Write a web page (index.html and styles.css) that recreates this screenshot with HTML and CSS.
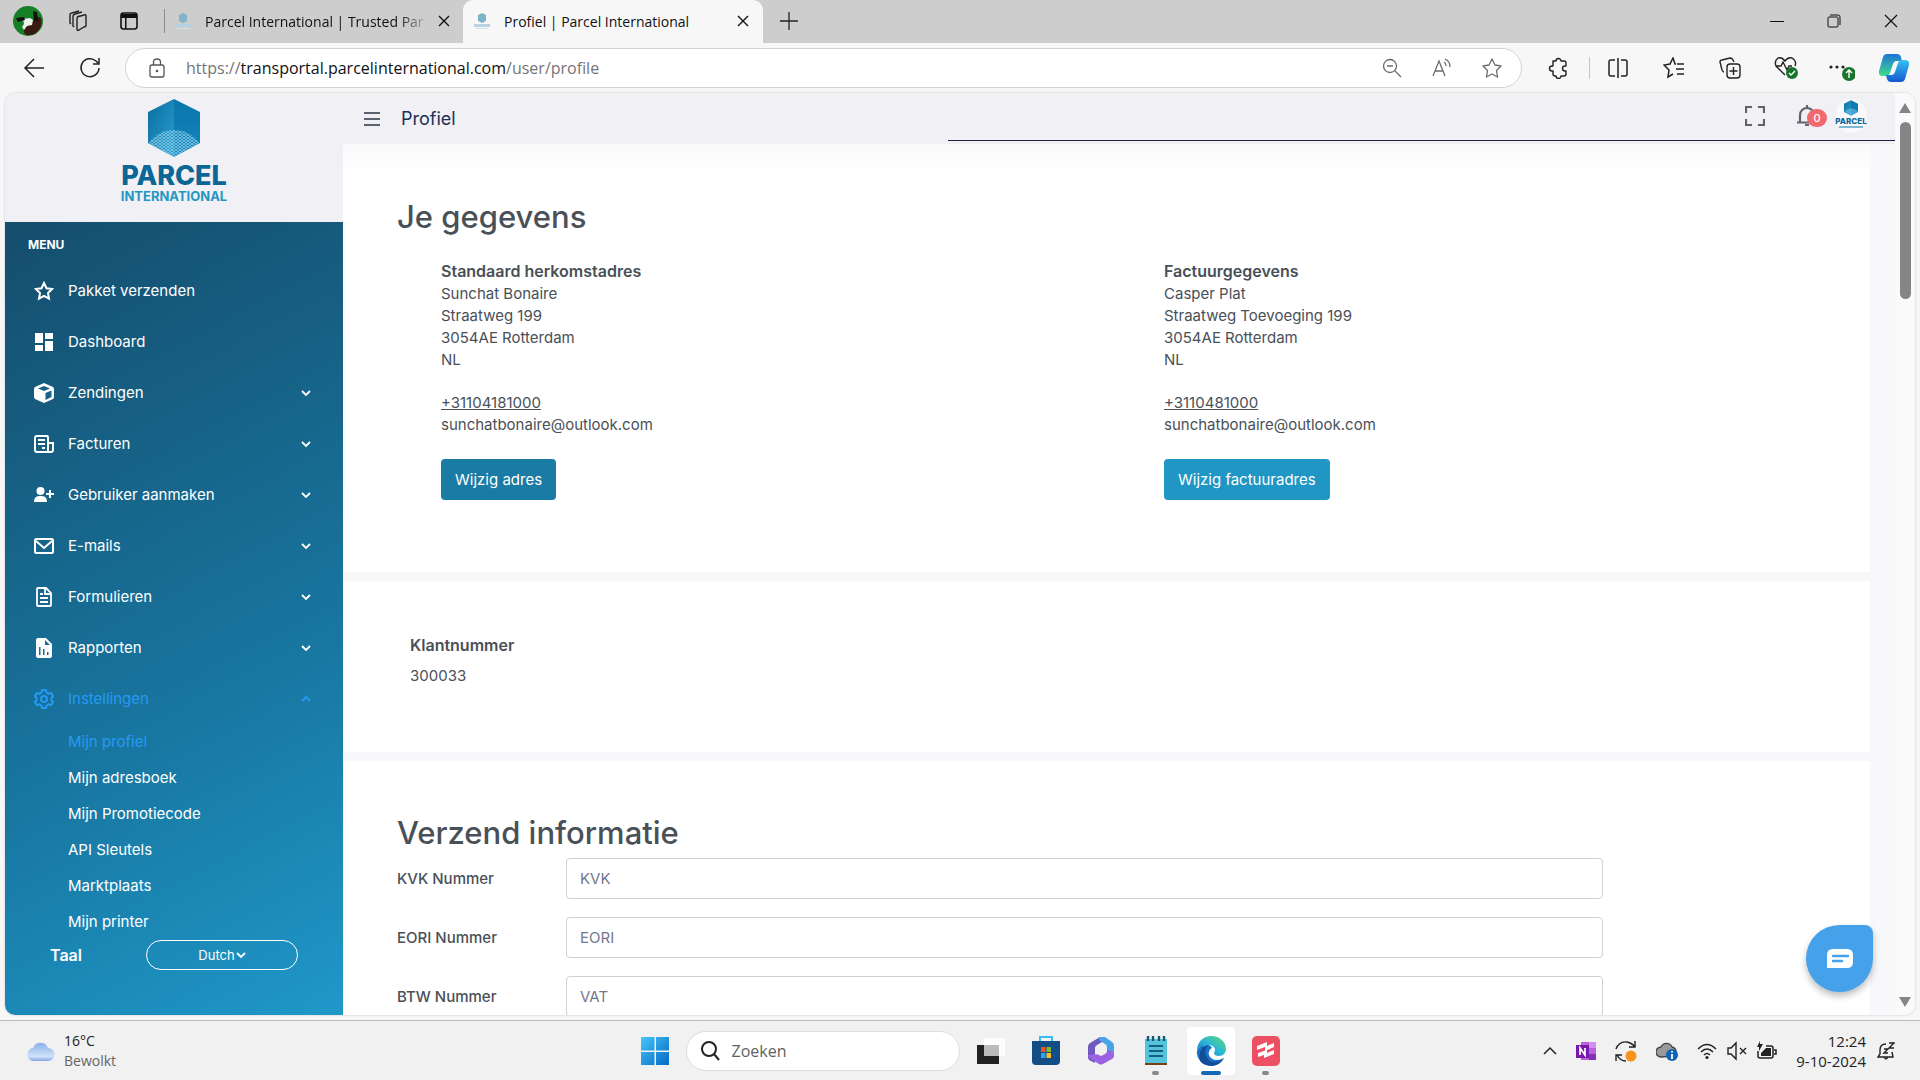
FILE: index.html
```html
<!DOCTYPE html>
<html lang="nl">
<head>
<meta charset="utf-8">
<title>Profiel | Parcel International</title>
<link rel="stylesheet" href="styles.css">
</head>
<body>
<svg class="sprite" aria-hidden="true">
  <defs>
    <linearGradient id="cubeLeft" x1="0" y1="0" x2="1" y2="1"><stop offset="0" stop-color="#0a6d9f"/><stop offset="1" stop-color="#2a9fd0"/></linearGradient>
    <linearGradient id="cubeRight" x1="0" y1="0" x2="0" y2="1"><stop offset="0" stop-color="#0a75ab"/><stop offset="1" stop-color="#1487bd"/></linearGradient>
    <linearGradient id="edgeGreen" x1="0" y1="1" x2="1" y2="0"><stop offset="0" stop-color="#1272c4"/><stop offset=".5" stop-color="#29b8d8"/><stop offset="1" stop-color="#5fdc6a"/></linearGradient>
    <linearGradient id="winBlue" x1="0" y1="0" x2="1" y2="1"><stop offset="0" stop-color="#45c6f8"/><stop offset="1" stop-color="#0668c4"/></linearGradient>
    <linearGradient id="cloudFill" x1="0" y1="0" x2="0" y2="1"><stop offset="0" stop-color="#8ab0ea"/><stop offset=".75" stop-color="#cfe2fa"/><stop offset="1" stop-color="#88a5e6"/></linearGradient>
    <linearGradient id="pilotA" x1="0" y1="0" x2="0" y2="1"><stop offset="0" stop-color="#1d73d8"/><stop offset="1" stop-color="#3fdc8c"/></linearGradient>
    <linearGradient id="pilotB" x1="0" y1="0" x2="0" y2="1"><stop offset="0" stop-color="#35c2f3"/><stop offset="1" stop-color="#1457d0"/></linearGradient>
    <pattern id="mesh" width="4" height="3" patternUnits="userSpaceOnUse"><path d="M0 3 4 0M0 0l4 3" stroke="#8fd0ee" stroke-width=".8"/></pattern>
    <symbol id="cube" viewBox="0 0 52 58"><path d="M26 0 0 13v31l26 14z" fill="url(#cubeLeft)"/><path d="M26 0l26 13v31L26 58z" fill="url(#cubeRight)"/><path d="M1 44c6-9 15-13 25-13s19 4 25 13L26 58z" fill="url(#mesh)"/></symbol>
    <symbol id="chev" viewBox="0 0 10 10"><path d="M1 3l4 4 4-4" fill="none" stroke="currentColor" stroke-width="1.8"/></symbol>
    <symbol id="close" viewBox="0 0 12 12"><path d="M1 1l10 10M11 1 1 11" fill="none" stroke="currentColor" stroke-width="1.4"/></symbol>
    <symbol id="favicon" viewBox="0 0 16 16"><path d="M8 0l4 2v6l-4 2-4-2V2z" fill="#7fb4cb"/><path d="M0 11h16v3H0z" fill="#b5d3e0"/><path d="M2 15h12v1H2z" fill="#d6e4ea"/></symbol>
  </defs>
</svg>

<div class="tabstrip">
  <button class="avatar" aria-label="Account"><svg viewBox="0 0 30 30"><circle cx="15" cy="15" r="15" fill="#158026"/><path d="M13 29c-4-3-2-9 2-11 4-1 6-4 8-8l5 2c2 7-2 15-9 17z" fill="#3c1a14"/><path d="M10 13l7-1 3 2-1 5-5 1-3 4-2-3 2-3z" fill="#edf4ec"/><path d="M3 12l8-1 1 3-7 2zM20 5l4 1 1 8-4 2z" fill="#111"/></svg></button>
  <button class="strip-btn" aria-label="Werkruimten"><svg class="i22" viewBox="0 0 22 22"><g fill="none" stroke="#222" stroke-width="1.4"><path d="M11 7l7-2q2-1 2 1v9q0 2-2 2l-5 3q-2 1-2-1V8q0-1 2-2"/><path d="M8 17l-1-1V6q0-1 2-2l7-2M5 14l-1-1V5q0-2 2-2l7-2" /></g></svg></button>
  <button class="strip-btn" aria-label="Tabbladacties"><svg class="i18" viewBox="0 0 18 18"><rect x="1" y="1" width="16" height="16" rx="2.500" fill="none" stroke="#111" stroke-width="1.600"/><path d="M1 2h16v4H1zM5 6h1.500v11H5z" fill="#111"/></svg></button>
  <span class="strip-line"></span>
  <div class="tab"><svg class="i16"><use href="#favicon"/></svg><span class="tab-title faded">Parcel International | Trusted Part</span><button aria-label="Sluiten"><svg class="i12"><use href="#close"/></svg></button></div>
  <div class="tab active"><svg class="i16"><use href="#favicon"/></svg><span class="tab-title">Profiel | Parcel International</span><button aria-label="Sluiten"><svg class="i12"><use href="#close"/></svg></button></div>
  <button class="strip-btn" aria-label="Nieuw tabblad"><svg class="i18" viewBox="0 0 18 18"><path d="M9 0v18M0 9h18" stroke="#222" stroke-width="1.300"/></svg></button>
  <div class="win-controls">
    <button aria-label="Minimaliseren"><svg class="i14" viewBox="0 0 14 14"><path d="M0 7.500h14" stroke="#111"/></svg></button>
    <button aria-label="Herstellen"><svg class="i14" viewBox="0 0 14 14"><path d="M3 1h8q2 0 2 2v8" fill="none" stroke="#111"/><rect x="1" y="3" width="10" height="10" rx="1" fill="none" stroke="#111"/></svg></button>
    <button aria-label="Sluiten"><svg class="i14" viewBox="0 0 14 14"><path d="M1 1l12 12M13 1 1 13" stroke="#111" stroke-width="1.200"/></svg></button>
  </div>
</div>

<div class="toolbar">
  <button class="tool" aria-label="Terug"><svg class="i22" viewBox="0 0 22 22"><path d="M21 11H2M11 2l-9 9 9 9" fill="none" stroke="#222" stroke-width="1.500"/></svg></button>
  <button class="tool" aria-label="Vernieuwen"><svg class="i22" viewBox="0 0 22 22"><path d="M20 11a9 9 0 1 1-3-7l2 2M20 1v6h-6" fill="none" stroke="#222" stroke-width="1.500"/></svg></button>
  <div class="omnibox">
    <svg class="i20" viewBox="0 0 20 20"><g fill="none" stroke="#555" stroke-width="1.300"><rect x="3" y="7" width="14" height="12" rx="2"/><path d="M6.500 7V4q0-3 3.500-3t3.500 3v3"/></g><circle cx="10" cy="13" r="1.300" fill="#555"/></svg>
    <span class="url">https://<b>transportal.parcelinternational.com</b>/user/profile</span>
    <button aria-label="Uitzoomen"><svg class="i20" viewBox="0 0 20 20"><g fill="none" stroke="#6c6c6c" stroke-width="1.300"><circle cx="8" cy="8" r="6.500"/><path d="M5 8h6M13 13l6 6"/></g></svg></button>
    <button aria-label="Voorlezen"><svg class="i20" viewBox="0 0 20 20"><path d="M1 18 7 3l6 15M3 13h8M12 4q2 1 2 4M13 1q5 2 5 8" fill="none" stroke="#6c6c6c" stroke-width="1.300"/></svg></button>
    <button aria-label="Favoriet"><svg class="i20" viewBox="0 0 20 20"><path d="M10 1l3 6 6 1-4.500 4.500 1 6.500-5.500-3-5.500 3 1-6.500L1 8l6-1z" fill="none" stroke="#6c6c6c" stroke-width="1.300" stroke-linejoin="round"/></svg></button>
  </div>
  <div class="tools">
    <button class="tool first" aria-label="Extensies"><svg class="i22" viewBox="0 0 22 22"><path d="M5 4h3a2.500 2.500 0 0 1 5 0h3q2 0 2 2v3h-1a2.500 2.500 0 0 0 0 5h1v3q0 2-2 2h-3a2.500 2.500 0 0 1-5 0H7q-2 0-2-2v-3H4a2.500 2.500 0 0 1 0-5h1z" fill="none" stroke="#222" stroke-width="1.400" stroke-linejoin="round"/></svg></button>
    <span class="tool-line"></span>
    <button class="tool" aria-label="Scherm splitsen"><svg class="i22" viewBox="0 0 22 22"><path d="M8 3H4Q2 3 2 5v12q0 2 2 2h4M14 3h4q2 0 2 2v12q0 2-2 2h-4M11 1v20" fill="none" stroke="#222" stroke-width="1.500"/></svg></button>
    <button class="tool" aria-label="Favorieten"><svg class="i22" viewBox="0 0 22 22"><path d="M13 7h-1L10 1 7 7l-6 1 5 5-1 7 5-3M14 7h7M13 12h8M14 17h7" fill="none" stroke="#222" stroke-width="1.500"/></svg></button>
    <button class="tool" aria-label="Verzamelingen"><svg class="i22" viewBox="0 0 22 22"><g fill="none" stroke="#222" stroke-width="1.400"><path d="M5 15q-1 0-2-2L1 5q0-2 2-2l8-2q2 0 3 2l1 2"/><rect x="8" y="7" width="13" height="14" rx="3"/><path d="M14.500 10v8M10.500 14h8"/></g></svg></button>
    <button class="tool" aria-label="Browseressenties"><svg class="i24" viewBox="0 0 24 24"><path d="M11 19 2 10Q0 5 4 2q4-1 7 3 3-4 7-3 5 3 3 8M2 10h5l2-4 4 8 2-4h3" fill="none" stroke="#222" stroke-width="1.400"/><circle cx="18" cy="17" r="6" fill="#19752b"/><path d="M15 17l2 2 4-4" fill="none" stroke="#fff" stroke-width="1.400"/></svg></button>
    <button class="tool" aria-label="Meer"><svg class="i26" viewBox="0 0 26 26"><g fill="#222"><circle cx="2" cy="12" r="1.600"/><circle cx="8" cy="12" r="1.600"/><circle cx="14" cy="12" r="1.600"/></g><circle cx="20" cy="19" r="7" fill="#19752b"/><path d="M20 23v-8M17 18l3-3 3 3" fill="none" stroke="#fff" stroke-width="1.400"/></svg></button>
    <button class="tool last" aria-label="Copilot"><svg class="i30" viewBox="0 0 30 30"><path d="M8 1h10q3 0 4 3l1 4h-6q-2 0-3 3l-3 9q-1 3-4 3H3q-4-1-3-5L4 4q1-3 4-3z" fill="url(#pilotA)"/><path d="M22 29H12q-3 0-4-3l-1-4h6q2 0 3-3l3-9q1-3 4-3h4q4 1 3 5l-4 14q-1 3-4 3z" fill="url(#pilotB)"/></svg></button>
  </div>
</div>

<div class="viewport">
  <aside class="sidebar">
    <a class="brand" href="#"><svg class="brand-cube"><use href="#cube"/></svg><span class="brand-name">PARCEL</span><span class="brand-sub">INTERNATIONAL</span></a>
    <nav class="menu">
      <p class="menu-title">MENU</p>
      <a href="#" class="item"><svg viewBox="0 0 20 20"><path d="M10 2l2.500 5.300 5.500.7-4 4 1 5.700-5-2.800-5 2.800L6 12 2 8l5.500-.7z" fill="none" stroke="currentColor" stroke-width="2"/></svg><span>Pakket verzenden</span></a>
      <a href="#" class="item"><svg viewBox="0 0 20 20"><path d="M1 1h8v10H1zM11 1h8v6h-8zM1 13h8v6H1zM11 9h8v10h-8z" fill="currentColor"/></svg><span>Dashboard</span></a>
      <a href="#" class="item"><svg viewBox="0 0 20 20"><path d="M10 0l9 4q1 1 1 2v8q0 1-1 2l-9 4-9-4q-1-1-1-2V6q0-1 1-2z" fill="currentColor"/><path d="M10 3 4 5.500 10 8l6-2.500zM11.500 10v7l6-3V7.500z" fill="#17618a"/></svg><span>Zendingen</span><svg class="caret"><use href="#chev"/></svg></a>
      <a href="#" class="item"><svg viewBox="0 0 20 20"><path d="M3 2h10q1 0 1 1v15H3q-2 0-2-2V4q0-2 2-2zM14 9h5v7q0 2-2 2h-3M4 6h7M4 10h7M8 14h3" fill="none" stroke="currentColor" stroke-width="2"/></svg><span>Facturen</span><svg class="caret"><use href="#chev"/></svg></a>
      <a href="#" class="item"><svg viewBox="0 0 20 20"><circle cx="6.500" cy="6" r="4" fill="currentColor"/><path d="M0 17q0-6 5-6h3q5 0 5 6zM15 5h2v3h3v2h-3v3h-2v-3h-3V8h3z" fill="currentColor"/></svg><span>Gebruiker aanmaken</span><svg class="caret"><use href="#chev"/></svg></a>
      <a href="#" class="item"><svg viewBox="0 0 20 20"><rect x="1" y="3" width="18" height="14" rx="1.500" fill="none" stroke="currentColor" stroke-width="2"/><path d="M2 5l8 7 8-7" fill="none" stroke="currentColor" stroke-width="2"/></svg><span>E-mails</span><svg class="caret"><use href="#chev"/></svg></a>
      <a href="#" class="item"><svg viewBox="0 0 20 20"><path d="M4 1h8l5 5v12q0 1-1 1H4q-1 0-1-1V2q0-1 1-1zM11 1v6h6M6 7h3M6 11h8M6 15h8" fill="none" stroke="currentColor" stroke-width="1.800"/></svg><span>Formulieren</span><svg class="caret"><use href="#chev"/></svg></a>
      <a href="#" class="item"><svg viewBox="0 0 20 20"><path d="M4 0h8l6 6v12q0 2-2 2H4q-2 0-2-2V2q0-2 2-2z" fill="currentColor"/><path d="M11 2v5h5zM5 9h1.500v8H5zM9 11h1.500v6H9zM13 14h1.500v3H13z" fill="#1a6c96"/></svg><span>Rapporten</span><svg class="caret"><use href="#chev"/></svg></a>
      <a href="#" class="item current"><svg viewBox="0 0 20 20"><g fill="none" stroke="currentColor" stroke-width="2" stroke-linejoin="round"><path d="M8 1h4l.6 2.600 2 1.200 2.600-.8 2 3.400L17.300 9v2l1.900 1.700-2 3.400-2.600-.8-2 1.200L12 19H8l-.6-2.500-2-1.200-2.600.8-2-3.400L2.700 11V9L.8 7.400l2-3.400 2.600.8 2-1.200z"/><circle cx="10" cy="10" r="3"/></g></svg><span>Instellingen</span><svg class="caret up"><use href="#chev"/></svg></a>
      <div class="submenu">
        <a href="#" class="current">Mijn profiel</a>
        <a href="#">Mijn adresboek</a>
        <a href="#">Mijn Promotiecode</a>
        <a href="#">API Sleutels</a>
        <a href="#">Marktplaats</a>
        <a href="#">Mijn printer</a>
      </div>
      <div class="language"><span id="taal">Taal</span><button aria-labelledby="taal">Dutch<svg class="i10"><use href="#chev"/></svg></button></div>
    </nav>
  </aside>

  <div class="page">
    <header class="topbar">
      <button aria-label="Menu"><svg class="burger" viewBox="0 0 16 16"><path d="M0 2h16M0 8h16M0 14h16" stroke="#5a6270" stroke-width="2"/></svg></button>
      <h1>Profiel</h1>
      <div class="top-actions">
        <button aria-label="Volledig scherm"><svg class="i20" viewBox="0 0 20 20"><path d="M7 1H1v6M13 1h6v6M7 19H1v-6M13 19h6v-6" fill="none" stroke="#5f646c" stroke-width="2.200"/></svg></button>
        <button class="bell" aria-label="Meldingen"><svg class="i24" viewBox="0 0 24 24"><path d="M4 18V11a7 7 0 0 1 14 0v7M1 18.500h20M11 4V1M9 21h4" fill="none" stroke="#5f646c" stroke-width="2.200"/></svg><span class="badge">0</span></button>
        <a class="mini-logo" href="#"><svg class="mini-cube"><use href="#cube"/></svg><span>PARCEL</span><i></i></a>
      </div>
      <div class="progress"></div>
    </header>
    <main class="content">
      <section class="panel details">
        <h2>Je gegevens</h2>
        <div class="addresses">
          <div>
            <address><strong>Standaard herkomstadres</strong><br>Sunchat Bonaire<br>Straatweg 199<br>3054AE Rotterdam<br>NL</address>
            <address><a href="#">+31104181000</a><br>sunchatbonaire@outlook.com</address>
            <button class="btn dark">Wijzig adres</button>
          </div>
          <div>
            <address><strong>Factuurgegevens</strong><br>Casper Plat<br>Straatweg Toevoeging 199<br>3054AE Rotterdam<br>NL</address>
            <address><a href="#">+3110481000</a><br>sunchatbonaire@outlook.com</address>
            <button class="btn">Wijzig factuuradres</button>
          </div>
        </div>
      </section>
      <section class="panel customer"><strong>Klantnummer</strong><span>300033</span></section>
      <section class="panel shipping">
        <h2>Verzend informatie</h2>
        <form>
          <div class="row"><label for="kvk">KVK Nummer</label><input id="kvk" placeholder="KVK"></div>
          <div class="row"><label for="eori">EORI Nummer</label><input id="eori" placeholder="EORI"></div>
          <div class="row"><label for="vat">BTW Nummer</label><input id="vat" placeholder="VAT"></div>
        </form>
      </section>
    </main>
    <button class="chat" aria-label="Chat"><svg viewBox="0 0 26 20"><path d="M6 0h14q6 0 6 6v7q0 6-6 6H0V6q0-6 6-6z" fill="#fff"/><path d="M6 7h15M6 12h9" stroke="#45a1ea" stroke-width="2.400" stroke-linecap="round"/></svg></button>
  </div>

  <div class="scrollbar"><svg class="i12" viewBox="0 0 12 12"><path d="M6 1l6 10H0z" fill="#858585"/></svg><span class="thumb"></span><svg class="i12 down" viewBox="0 0 12 12"><path d="M6 11 0 1h12z" fill="#858585"/></svg></div>
</div>

<footer class="taskbar">
  <div class="weather"><svg class="cloud" viewBox="0 0 30 20"><path d="M7 20a7 7 0 0 1 0-13h1a8 8 0 0 1 15 0 6.500 6.500 0 0 1 0 13z" fill="url(#cloudFill)"/></svg><div>16°C<br><span>Bewolkt</span></div></div>
  <div class="apps">
    <button class="app" aria-label="Start"><svg class="i30" viewBox="0 0 30 30"><path d="M1 1h13.500v13.500H1zM16 1h13v13.500H16zM1 16h13.500v13H1zM16 16h13v13H16z" fill="url(#winBlue)"/></svg></button>
    <label class="search"><svg class="i20" viewBox="0 0 20 20"><g fill="none" stroke="#222" stroke-width="2"><circle cx="9" cy="8" r="7"/><path d="M14 13l5 6"/></g></svg><input aria-label="Zoeken" placeholder="Zoeken"></label>
    <button class="app" aria-label="Taakweergave"><svg class="i30" viewBox="0 0 30 30"><path d="M1 9h22v19H1z" fill="#222"/><path d="M8 2h21v18H8z" fill="#fff" opacity=".85"/><path d="M8 9h15v11H8z" fill="#bbb"/></svg></button>
    <button class="app" aria-label="Store"><svg class="i30" viewBox="0 0 30 30"><path d="M9 5V1h12v4" fill="none" stroke="#38bdf0" stroke-width="2"/><path d="M1 5h28v20q0 4-4 4H5q-4 0-4-4z" fill="#124d85"/><path d="M10 11h4.500v5H10z" fill="#f05325"/><path d="M15.500 11H20v5h-4.500z" fill="#80bb28"/><path d="M10 17h4.500v5H10z" fill="#2aa7e8"/><path d="M15.500 17H20v5h-4.500z" fill="#fdbb2c"/></svg></button>
    <button class="app" aria-label="Microsoft 365"><svg class="i30" viewBox="0 0 30 30"><path d="M14 1 4 7q-2 1-2 4v10q0 3 3 4l4 2V12q0-2 2-3l5-3z" fill="#6d59c0"/><path d="M13 1h6l7 5q2 1 2 4v9l-7-3v-5q0-2-2-3l-6-4z" fill="#48a4e6"/><path d="M2 19l12-1 5 0q2-1 2-3v-2l7 4v3q0 2-2 3l-9 5q-2 1-4 0l-8-5q-3-2-3-4z" fill="#9a63e0"/><path d="M15 9l4 3v6l-4 2-4-2v-6z" fill="#f1f1f1"/></svg></button>
    <button class="app running" aria-label="Kladblok"><svg class="i30" viewBox="0 0 30 30"><path d="M4 3h22v24H4z" fill="#55c2dc"/><path d="M4 27h22v2H4z" fill="#7b3f14"/><path d="M7 0v5M12 0v5M18 0v5M23 0v5" stroke="#155a75" stroke-width="2.400"/><path d="M8 10h14M8 15h14M8 20h14" stroke="#136080" stroke-width="2"/></svg></button>
    <button class="app focused" aria-label="Edge"><svg class="i30" viewBox="0 0 30 30"><path d="M1 13C2 5 8 0 15 0c9 0 15 6 15 13 0 4-3 7-7 7-3 0-5-1-5-3l1-3c0-3-3-5-7-5S2 11 1 14z" fill="url(#edgeGreen)"/><path d="M12 9C5 9 0 12 1 18c1 7 7 12 14 12 6 0 10-3 13-8-5 3-13 3-15-3-1-3 1-6 3-7-1-2-2-3-4-3z" fill="#1674c8"/><path d="M5 26c-4-7 0-15 7-17-4 4-4 12 2 16 4 2 9 1 14-3-5 9-16 10-23 4z" fill="#114e97"/></svg></button>
    <button class="app running" aria-label="Scribe"><svg class="i30" viewBox="0 0 30 30"><rect x="1" y="0" width="28" height="30" rx="5" fill="#ed5063"/><path d="M6 14v-4l10-4v4l7-3v4l-9 4v-4zM7 21v-4l9-3v3l7-3v4l-10 4v-3z" fill="#fff"/></svg></button>
  </div>
  <div class="tray">
    <button aria-label="Meer pictogrammen"><svg class="i14" viewBox="0 0 14 14"><path d="M1 10l6-6 6 6" fill="none" stroke="#222" stroke-width="1.500"/></svg></button>
    <button aria-label="OneNote"><svg class="i20" viewBox="0 0 20 20"><path d="M5 1h15v18H5z" fill="#b861dc"/><path d="M13 1h7v6h-7z" fill="#d28ff0"/><path d="M13 13h7v6h-7z" fill="#8630b8"/><path d="M0 4h13v13H0z" fill="#7719aa"/><path d="M4 14V7l5 7V7" fill="none" stroke="#fff" stroke-width="1.700"/></svg></button>
    <button aria-label="Synchronisatie"><svg class="i22" viewBox="0 0 22 22"><path d="M1 9Q4 1 12 2q5 1 8 5M20 1v6h-6M1 21v-6h6M2 15q3 6 9 6" fill="none" stroke="#222" stroke-width="1.400"/><circle cx="16" cy="16" r="5.500" fill="#f5951d"/></svg></button>
    <button aria-label="OneDrive"><svg class="i22" viewBox="0 0 22 22"><path d="M5 17a5 5 0 0 1 0-10 6 6 0 0 1 11 0 5 5 0 0 1 2 9z" fill="#999" stroke="#444" stroke-width="1.300"/><circle cx="16" cy="15" r="6" fill="#1165b4"/><path d="M16 14v5M16 11v1.500" stroke="#fff" stroke-width="1.800"/></svg></button>
    <button class="net" aria-label="Netwerk en geluid"><svg class="i20" viewBox="0 0 20 20"><g fill="none" stroke="#222" stroke-width="1.500"><path d="M1 8q9-9 18 0M4 11q6-6 12 0M7 14q3-3 6 0"/></g><circle cx="10" cy="16.500" r="1.600" fill="#222"/></svg><svg class="i20" viewBox="0 0 20 20"><path d="M1 7h3l5-5v16l-5-5H1zM13 7l6 6M19 7l-6 6" fill="none" stroke="#222" stroke-width="1.400"/></svg><svg class="i20" viewBox="0 0 20 20"><path d="M1 10v5q0 2 2 2h11q2 0 2-2V7q0-2-2-2H9M17 9h2v4h-2" fill="none" stroke="#222" stroke-width="1.500"/><path d="M4 12l5-5h5v8H4zM3 0v3h3L2 10V6H0z" fill="#222"/></svg></button>
    <div class="clock">12:24<br>9-10-2024</div>
    <button aria-label="Niet storen"><svg class="i18" viewBox="0 0 18 18"><path d="M9 2Q3 2 3 8v4l-2 3h15l-1-5M7 15q2 4 4 0M7 7h4l-4 4h4M12 1h5l-5 5h5" fill="none" stroke="#222" stroke-width="1.400"/></svg></button>
  </div>
</footer>
</body>
</html>
```
FILE: styles.css
```css
* { box-sizing: border-box; }
html, body { height: 100%; margin: 0; }
body {
  display: flex;
  flex-direction: column;
  overflow: hidden;
  background: #f7f7f7;
  color: #495057;
  font-family: Inter, "Open Sans", sans-serif;
  font-size: 15px;
}
button { padding: 0; border: 0; background: none; color: inherit; font: inherit; }
a { color: inherit; text-decoration: none; }
svg { display: block; flex: none; }
.sprite { position: absolute; width: 0; height: 0; }
.i10 { width: 10px; height: 10px; }
.i12 { width: 12px; height: 12px; }
.i14 { width: 14px; height: 14px; }
.i16 { width: 16px; height: 16px; }
.i18 { width: 18px; height: 18px; }
.i20 { width: 20px; height: 20px; }
.i22 { width: 22px; height: 22px; }
.i24 { width: 24px; height: 24px; }
.i26 { width: 26px; height: 26px; }
.i30 { width: 30px; height: 30px; }

/* Browser tabs */
.tabstrip {
  display: flex;
  flex: none;
  align-items: center;
  height: 43px;
  padding-bottom: 1px;
  background: #cdcdcd;
  color: #111;
  font-family: "Open Sans", sans-serif;
  font-size: 14px;
}
.avatar { width: 30px; height: 30px; margin: 0 8px 0 13px; }
.strip-btn { display: flex; justify-content: center; width: 52px; }
.strip-line { width: 1px; height: 24px; margin: 0 3px 0 9px; background: #8b8b8b; }
.tab {
  display: flex;
  align-items: center;
  width: 300px;
  height: 42px;
  padding: 0 14px 0 11px;
  gap: 14px;
}
.tab:not(.active) { width: 295px; padding: 0 13px 0 7px; }
.tab.active { border-radius: 10px 10px 0 0; background: #f7f7f7; box-shadow: 0 1px #f7f7f7; }
.tab-title { flex: 1; min-width: 0; white-space: nowrap; }
.faded { mask-image: linear-gradient(90deg, #000 88%, #0003); }
.win-controls { display: flex; margin-left: auto; padding-right: 1px; }
.win-controls button { display: flex; justify-content: center; width: 57px; }

/* Address bar */
.toolbar { display: flex; flex: none; align-items: center; height: 50px; padding-left: 6px; }
.tool { display: flex; justify-content: center; width: 56px; }
.omnibox {
  display: flex;
  flex: 1;
  align-items: center;
  height: 40px;
  margin-left: 7px;
  padding: 0 19px 0 21px;
  border: 1px solid #d3d3d3;
  border-radius: 20px;
  background: #fff;
}
.url {
  flex: 1;
  margin-left: 19px;
  color: #757575;
  font-family: "Open Sans", sans-serif;
  font-size: 16px;
}
.url b { color: #111; font-weight: 400; }
.omnibox button { margin-left: 30px; }
.tools { display: flex; align-items: center; }
.tool.first { width: 67px; padding-left: 6px; }
.tool-line { width: 1px; height: 22px; background: #c4c4c4; }
.tool.last { width: 50px; padding-right: 2px; }

/* Page frame */
.viewport {
  display: flex;
  flex: 1;
  min-height: 0;
  margin: 0 5px 5px;
  overflow: hidden;
  border-radius: 10px;
  background: #f8f8fb;
  box-shadow: 0 0 2px #bbb;
}
.sidebar { display: flex; flex-direction: column; flex: none; width: 338px; background: #f0f0f5; }
.brand { display: flex; flex-direction: column; align-items: center; height: 129px; padding-top: 6px; }
.brand-cube { width: 52px; height: 58px; }
.brand-name { margin-top: 6px; color: #0b6796; font-size: 27px; font-weight: 800; line-height: 26px; }
.brand-sub { color: #2496c2; font-size: 13px; font-weight: 700; line-height: 14px; }
.menu {
  flex: 1;
  padding: 11px 23px 0;
  background: linear-gradient(152deg, #154d6c 0%, #1876a0 60%, #1f98c9 100%);
  color: #fff;
}
.menu-title { margin: 0 0 8px; font-size: 12px; font-weight: 700; line-height: 24px; }
.item { display: flex; align-items: center; height: 51px; padding: 0 9px 0 6px; gap: 14px; }
.item svg { width: 20px; height: 20px; }
.item span { flex: 1; }
.item .caret { width: 10px; height: 10px; }
.caret.up { transform: rotate(180deg); }
.menu .current { color: #259af5; }
.submenu { display: flex; flex-direction: column; padding: 0 0 0 40px; }
.submenu a { line-height: 36px; }
.language { display: flex; align-items: center; justify-content: space-between; padding: 0 22px; font-size: 16px; font-weight: 600; }
.language button {
  display: flex;
  align-items: center;
  justify-content: center;
  width: 152px;
  height: 30px;
  border: 1px solid #fff;
  border-radius: 15px;
  font-size: 13px;
  font-weight: 400;
  gap: 1px;
}

.page { position: relative; display: flex; flex: 1; flex-direction: column; min-width: 0; }
.topbar { position: relative; display: flex; flex: none; align-items: center; height: 51px; padding: 0 28px 0 21px; background: #f0f0f5; }
.burger { width: 16px; height: 16px; }
.topbar h1 { margin: 0 0 0 21px; color: #1b3158; font-size: 18px; font-weight: 400; }
.top-actions { display: flex; align-items: center; margin-left: auto; padding-bottom: 5px; }
.bell { position: relative; margin: 0 7px 0 31px; padding-right: 8px; }
.badge {
  position: absolute;
  top: 5px;
  left: 11px;
  width: 20px;
  border-radius: 9px;
  background: #f06a6e;
  color: #fff;
  font-size: 11px;
  font-weight: 500;
  line-height: 18px;
}
.mini-logo {
  display: flex;
  flex-direction: column;
  align-items: center;
  width: 32px;
  padding: 1px 0;
  border-radius: 50%;
  background: #f9f9fb;
  color: #0b6796;
  font-size: 8px;
  font-weight: 800;
  line-height: 10px;
}
.mini-cube { width: 14px; height: 16px; }
.mini-logo i { width: 24px; height: 2px; margin-bottom: 4px; background: #7bbbd3; }
.progress { position: absolute; right: 0; bottom: 3px; width: 61%; height: 1px; background: #1b2046; }

.content { display: flex; flex: 1; flex-direction: column; min-height: 0; margin-right: 25px; gap: 9px; }
.panel { flex: none; padding: 52px 54px 0; background: #fff; }
h2 { margin: 0; font-size: 31px; font-weight: 500; line-height: 42px; }
.details { padding-bottom: 72px; background: linear-gradient(#fafafa, #fff 30px); }
.addresses { display: grid; grid-template-columns: 1fr 1fr; margin-top: 22px; padding-left: 44px; column-gap: 71px; }
address { margin-bottom: 21px; font-style: normal; line-height: 22px; }
address a { text-decoration: underline; }
address + address { margin-bottom: 23px; }
strong { font-size: 16px; font-weight: 600; }
.btn { height: 41px; padding: 0 14px; border-radius: 4px; background: #2096c5; color: #fff; }
.btn.dark { background: #1a7ba5; }
.customer { display: flex; flex-direction: column; height: 171px; padding-left: 67px; line-height: 24px; gap: 7px; }
.shipping h2 { line-height: 39px; margin-bottom: 6px; }
.row { display: grid; grid-template-columns: 169px minmax(0, 1037px); align-items: center; margin-bottom: 18px; font-weight: 500; }
.row input {
  height: 41px;
  padding: 0 13px;
  border: 1px solid #ced0d6;
  border-radius: 4px;
  background: #fff;
  color: #495057;
  font: 400 15px Inter, sans-serif;
}
.row input::placeholder { color: #74788d; opacity: 1; }
.chat {
  position: absolute;
  right: 22px;
  bottom: 23px;
  display: flex;
  align-items: center;
  justify-content: center;
  width: 67px;
  height: 67px;
  border-radius: 50% 8px 50% 50%;
  background: #45a1ea;
  box-shadow: 0 4px 7px #0004;
}
.chat svg { width: 26px; height: 20px; }
.scrollbar { display: flex; flex: none; flex-direction: column; align-items: center; width: 20px; padding: 9px 0 7px; background: #fafafa; }
.thumb { width: 11px; height: 177px; margin-top: 8px; border-radius: 6px; background: #858585; }
.down { margin-top: auto; }

/* Windows taskbar */
.taskbar {
  display: grid;
  flex: none;
  grid-template-columns: 1fr auto 1fr;
  align-items: center;
  height: 60px;
  border-top: 1px solid #bbb;
  background: #f1f1f1;
  color: #222;
  font-family: "Open Sans", sans-serif;
  font-size: 14px;
  line-height: 20px;
}
.weather { display: flex; align-items: center; padding-left: 25px; gap: 9px; }
.weather span { color: #666; }
.cloud { width: 30px; height: 20px; }
.apps { display: flex; align-items: center; gap: 7px; }
.app { position: relative; display: flex; align-items: center; justify-content: center; width: 48px; height: 48px; border-radius: 4px; }
.search { display: flex; align-items: center; width: 274px; height: 40px; padding: 0 13px; gap: 10px; border: 1px solid #ddd; border-radius: 20px; background: #fff; }
.search input { flex: 1; min-width: 0; border: 0; outline: 0; background: none; font: 16px "Open Sans", sans-serif; }
.search input::placeholder { color: #616161; opacity: 1; }
.focused { background: #fff; }
.running::after, .focused::after { position: absolute; bottom: 0; width: 7px; height: 4px; border-radius: 2px; background: #888; content: ""; }
.focused::after { width: 20px; background: #1769b8; }
.tray { display: flex; align-items: center; justify-content: flex-end; padding-right: 25px; gap: 19px; }
.net { display: flex; gap: 10px; }
.clock { font-size: 15px; text-align: right; }
.tray .clock { margin-right: -8px; }
```
